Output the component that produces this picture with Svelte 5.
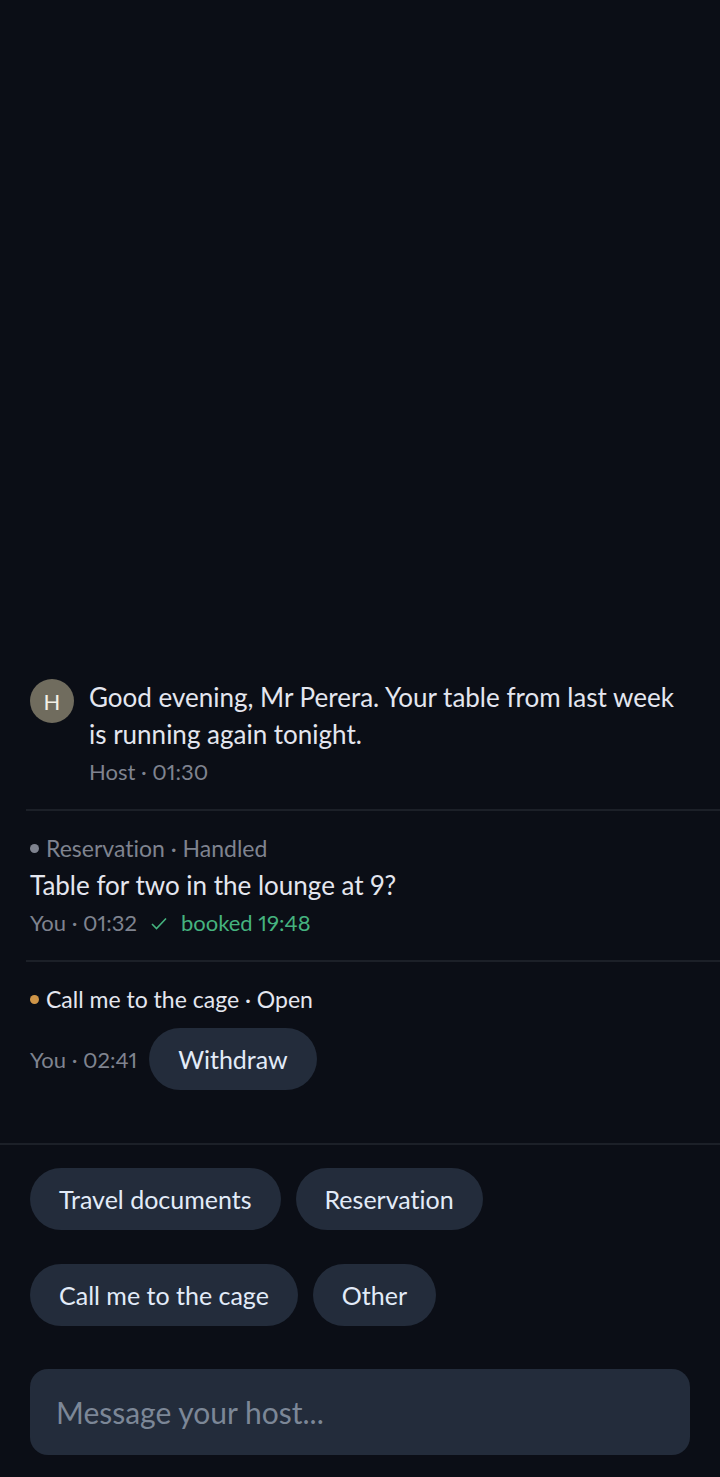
<script lang="ts">
  type Message = {
    id: number;
    author: string;
    time: string;
    host?: boolean;
    subject?: string;
    status?: 'Handled' | 'Open';
    body?: string;
    outcome?: string;
  };

  const subjects = ['Travel documents', 'Reservation', 'Call me to the cage', 'Other'];

  let messages = $state<Message[]>([
    {
      id: 1,
      author: 'Host',
      time: '01:30',
      host: true,
      body: 'Good evening, Mr Perera. Your table from last week is running again tonight.',
    },
    {
      id: 2,
      author: 'You',
      time: '01:32',
      subject: 'Reservation',
      status: 'Handled',
      body: 'Table for two in the lounge at 9?',
      outcome: 'booked 19:48',
    },
    { id: 3, author: 'You', time: '02:41', subject: 'Call me to the cage', status: 'Open' },
  ]);
  let draft = $state('');

  function now() {
    return new Date().toTimeString().slice(0, 5);
  }

  function withdraw(id: number) {
    messages = messages.filter((m) => m.id !== id);
  }

  function request(subject: string) {
    messages.push({ id: Date.now(), author: 'You', time: now(), subject, status: 'Open' });
  }

  function handleSubmit(e: Event) {
    e.preventDefault();
    const body = draft.trim();
    if (!body) return;
    messages.push({ id: Date.now(), author: 'You', time: now(), body });
    draft = '';
  }
</script>

<main class="chat">
  <ol class="thread">
    {#each messages as message (message.id)}
      <li class="message">
        {#if message.host}
          <span class="avatar" aria-hidden="true">H</span>
        {/if}
        <div class="content">
          {#if message.subject}
            <p class="subject" class:open={message.status === 'Open'}>
              <span class="dot"></span>
              {message.subject} · {message.status}
            </p>
          {/if}
          {#if message.body}
            <p class="body">{message.body}</p>
          {/if}
          <div class="meta">
            <span>{message.author} · {message.time}</span>
            {#if message.outcome}
              <span class="outcome">
                <svg width="20" height="20" viewBox="0 0 20 20" fill="none" stroke="currentColor" stroke-width="1.6" aria-hidden="true">
                  <path d="M3 11L7.5 15.5L17 5.5" />
                </svg>
                {message.outcome}
              </span>
            {/if}
            {#if message.status === 'Open'}
              <button class="pill" type="button" onclick={() => withdraw(message.id)}>Withdraw</button>
            {/if}
          </div>
        </div>
      </li>
    {/each}
  </ol>

  <form class="composer" onsubmit={handleSubmit}>
    <div class="subjects">
      {#each subjects as subject}
        <button class="pill" type="button" onclick={() => request(subject)}>{subject}</button>
      {/each}
    </div>
    <input
      class="draft"
      type="text"
      bind:value={draft}
      placeholder="Message your host..."
      aria-label="Message your host"
    />
  </form>
</main>

<style>
  :global(body) {
    background: #0b0e16;
  }

  .chat {
    display: flex;
    flex-direction: column;
    justify-content: flex-end;
    min-height: 100vh;
    color: #e4e6ef;
    font-family: Lato, sans-serif;
    font-size: 26px;
    font-variant-ligatures: none;
    font-variant-numeric: proportional-nums;
    line-height: 37px;
  }

  .thread {
    list-style: none;
    margin: 0;
    padding: 0 0 34px 26px;
  }

  .message {
    display: flex;
    gap: 15px;
    padding: 19px 30px 19px 4px;
  }

  .message + .message {
    border-top: 2px solid #1c2028;
  }

  .avatar {
    flex: none;
    display: grid;
    place-items: center;
    width: 44px;
    height: 44px;
    border-radius: 50%;
    background: #706c5e;
    color: #f3f0e6;
    font-size: 22px;
  }

  .content {
    flex: 1;
    min-width: 0;
  }

  .subject,
  .body {
    margin: 0;
  }

  .subject {
    display: flex;
    align-items: center;
    gap: 7px;
    color: #7f838f;
    font-size: 23px;
  }

  .subject.open {
    color: #e4e6ef;
  }

  .dot {
    width: 9px;
    height: 9px;
    border-radius: 50%;
    background: #7f838f;
  }

  .open .dot {
    background: #cf9548;
  }

  .meta {
    display: flex;
    align-items: center;
    gap: 12px;
    color: #7f838f;
    font-size: 22px;
  }

  .open + .meta {
    margin-top: 10px;
  }

  .outcome {
    display: flex;
    align-items: center;
    gap: 12px;
    color: #45b37f;
  }

  .pill {
    height: 62px;
    padding: 0 29px;
    border: 0;
    border-radius: 31px;
    background: #232c3b;
    color: #e2ebf8;
    font: inherit;
    font-size: 25px;
    cursor: pointer;
  }

  .composer {
    padding: 23px 30px 22px;
    border-top: 2px solid #1c2028;
  }

  .subjects {
    display: flex;
    flex-wrap: wrap;
    gap: 34px 15px;
    margin-bottom: 43px;
  }

  .draft {
    display: block;
    box-sizing: border-box;
    width: 100%;
    height: 86px;
    padding: 0 26px;
    border: 0;
    border-radius: 18px;
    background: #232c3b;
    color: #e2ebf8;
    font: inherit;
    font-size: 30px;
  }

  .draft::placeholder {
    color: #7c8797;
    opacity: 1;
  }

  .pill:focus-visible,
  .draft:focus-visible {
    outline: 2px solid #7c8797;
    outline-offset: 2px;
  }
</style>
